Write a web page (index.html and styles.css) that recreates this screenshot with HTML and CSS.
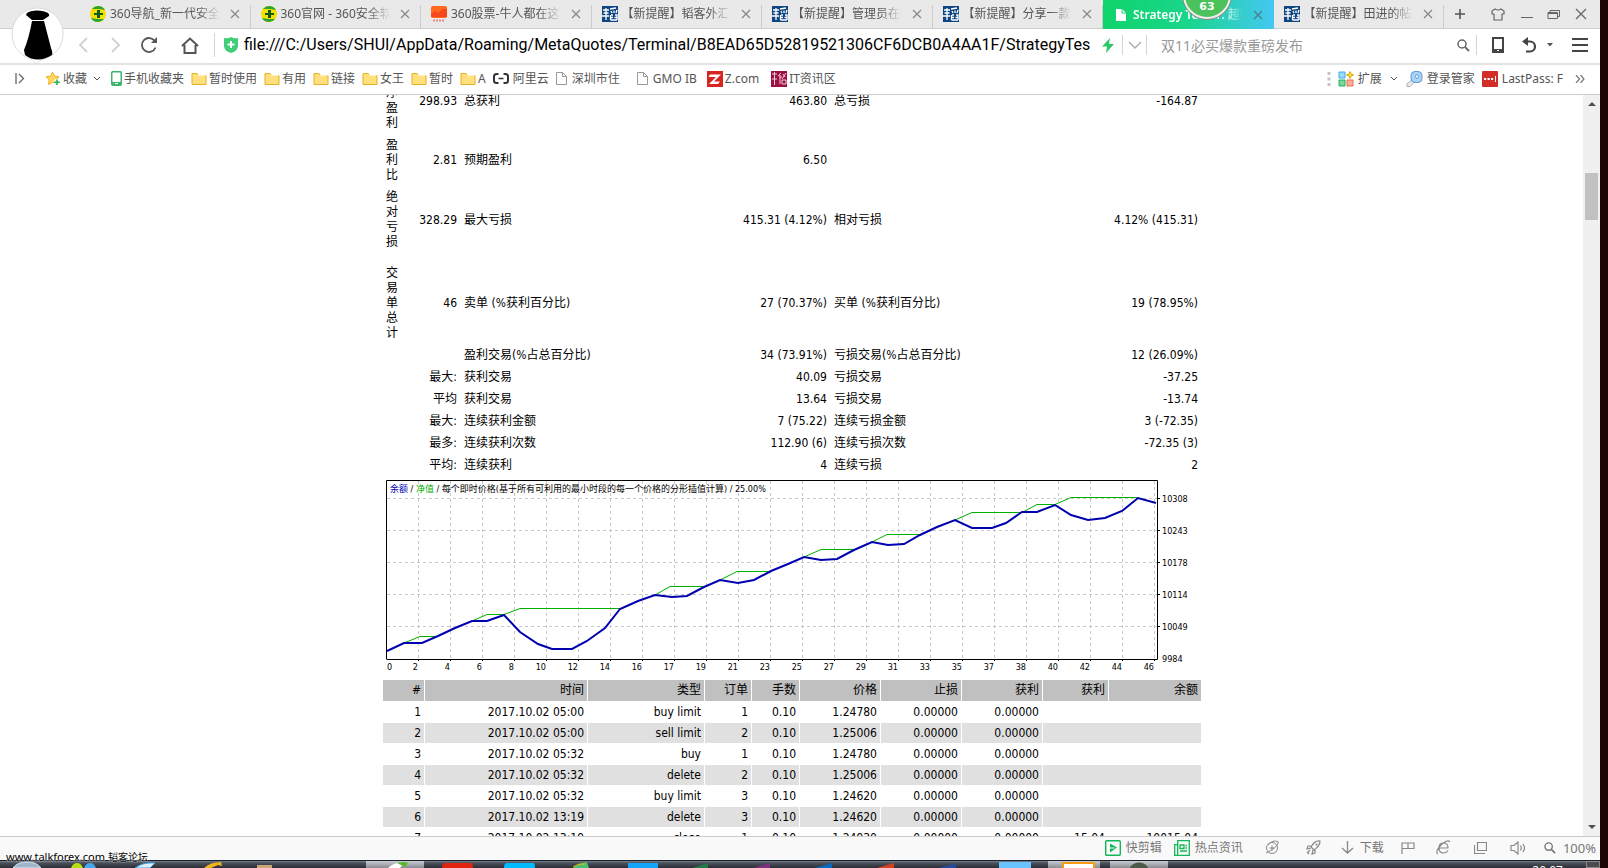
FILE: index.html
```html
<!DOCTYPE html>
<html lang="zh-CN">
<head>
<meta charset="utf-8">
<title>Strategy Tester: 超级</title>
<link rel="stylesheet" href="styles.css">
</head>
<body>
<svg class="defs" width="0" height="0" aria-hidden="true">
  <symbol id="i360" viewBox="0 0 16 16"><circle cx="8" cy="8" r="8" fill="#f4e000"/><path d="M8 0a8 8 0 0 1 7 4L9 3 2 3A8 8 0 0 1 8 0zM8 16a8 8 0 0 1-7-4l6 1 7 0a8 8 0 0 1-6 3z" fill="#2ba52e"/><path d="M7 4h3v3h3v2h-3v3H7V9H4V7h3z" fill="#0c5c1c"/></symbol>
  <symbol id="tao" viewBox="0 0 16 16"><rect width="16" height="16" fill="#0e4583"/><path d="M1 4h6M1.500 7h5M0 10h7M4 2v12M8 3l6-1M9 5l1 2M12 4.500V7M15 4l-1 3M9 9h2M8.500 9v5M13 9h2v5M8.500 11.500H11M12.500 11.500H15M8.500 14H15" stroke="#fff" stroke-width="1.300" fill="none"/></symbol>
  <symbol id="x" viewBox="0 0 10 10"><path d="M1 1l8 8M9 1L1 9" stroke="currentColor" stroke-width="1.300" fill="none"/></symbol>
  <symbol id="folder" viewBox="0 0 16 14"><path d="M1 1.500h5l1.500 2H15v9H1z" fill="#ffe07c" stroke="#e5af27"/><path d="M7 3.500h7.500" stroke="#fff2c0"/></symbol>
  <symbol id="page" viewBox="0 0 11 13"><path d="M.5.500h6l4 4v8H.500zM6.500.500v4h4" fill="#fff" stroke="#999"/></symbol>
  <symbol id="chev" viewBox="0 0 8 6"><path d="M1 1l3 3 3-3" stroke="currentColor" fill="none"/></symbol>
  <symbol id="mag" viewBox="0 0 13 13"><circle cx="5" cy="5" r="4" fill="none" stroke="currentColor" stroke-width="1.500"/><path d="M8 8l4 4" stroke="currentColor" stroke-width="1.800"/></symbol>
</svg>
<div class="desktop">
<div class="window">
  <header class="chrome">
    <div class="avatar" role="img" aria-label="avatar"><svg width="54" height="58" viewBox="0 0 54 58"><path d="M27 1a26 26 0 0 1 4 51.700l-5 4.300-5-5A26 26 0 0 1 27 1z" fill="#fff" stroke="#dcdcdc"/><path d="M17 6q3-2.500 10-2.500T38 6q2 2 1 3l-6 4H22l-6-5zM22 14h12l7 27q2 5 1 7-15 9-27 0l-1-5q5-12 8-29z" fill="#000"/></svg></div>
    <nav class="tabs" aria-label="标签">
      <div class="tab"><svg class="ic16"><use href="#i360"/></svg><a href="#">360导航_新一代安全上网</a><button aria-label="关闭"><svg><use href="#x"/></svg></button></div>
      <div class="tab"><svg class="ic16"><use href="#i360"/></svg><a href="#">360官网 - 360安全软件</a><button aria-label="关闭"><svg><use href="#x"/></svg></button></div>
      <div class="tab"><svg class="ic16" viewBox="0 0 16 16"><rect width="16" height="12" rx="2" fill="#ff6a1c"/><path d="M0 8l4-3 3 2 5-4 4 0v8H0z" fill="#f5471a"/><path d="M2 14.500h12" stroke="#e88" stroke-width="2" stroke-dasharray="2 1"/></svg><a href="#">360股票-牛人都在这里</a><button aria-label="关闭"><svg><use href="#x"/></svg></button></div>
      <div class="tab"><svg class="ic16"><use href="#tao"/></svg><a href="#">【新提醒】韬客外汇论坛</a><button aria-label="关闭"><svg><use href="#x"/></svg></button></div>
      <div class="tab"><svg class="ic16"><use href="#tao"/></svg><a href="#">【新提醒】管理员在哪里</a><button aria-label="关闭"><svg><use href="#x"/></svg></button></div>
      <div class="tab"><svg class="ic16"><use href="#tao"/></svg><a href="#">【新提醒】分享一款稳定</a><button aria-label="关闭"><svg><use href="#x"/></svg></button></div>
      <div class="tab active"><svg class="ic16" viewBox="0 0 16 16"><path d="M3 2h6l4 4v8H3z" fill="#fff"/><path d="M9 2v4h4" stroke="#1bd07a" fill="none"/></svg><a href="#">Strategy Tester: 超级</a><button aria-label="关闭"><svg><use href="#x"/></svg></button><span class="ball">63</span></div>
      <div class="tab"><svg class="ic16"><use href="#tao"/></svg><a href="#">【新提醒】田进的帖子</a><button aria-label="关闭"><svg><use href="#x"/></svg></button></div>
    </nav>
    <div class="wincontrols">
      <button aria-label="新标签"><svg width="12" height="12" viewBox="0 0 12 12"><path d="M6 1v10M1 6h10" stroke="#555" stroke-width="1.600"/></svg></button>
      <button aria-label="皮肤"><svg width="14" height="13" viewBox="0 0 14 13"><path d="M4 1L1 3v3h2v6h8V6h2V3l-3-2q-3 2-6 0z" fill="none" stroke="#666" stroke-width="1.200"/></svg></button>
      <button aria-label="最小化"><svg width="13" height="13" viewBox="0 0 13 13"><path d="M1 9.500h12" stroke="#666"/></svg></button>
      <button aria-label="还原"><svg width="13" height="13" viewBox="0 0 13 13"><path d="M1 4.500h9.500v6H1zM1 5.500h9.500M3 4V2.500h9.500v6H11" fill="none" stroke="#666"/></svg></button>
      <button aria-label="关闭窗口"><svg width="12" height="12" viewBox="0 0 12 12"><path d="M1 1l10 10M11 1L1 11" stroke="#666" stroke-width="1.300"/></svg></button>
    </div>
  </header>

  <div class="toolbar">
    <div class="nav">
      <button aria-label="后退"><svg width="10" height="16" viewBox="0 0 10 16"><path d="M9 1L2 8l7 7" stroke="#d0d0d0" stroke-width="1.800" fill="none"/></svg></button>
      <button aria-label="前进"><svg width="10" height="16" viewBox="0 0 10 16"><path d="M1 1l7 7-7 7" stroke="#d0d0d0" stroke-width="1.800" fill="none"/></svg></button>
      <button aria-label="刷新"><svg width="18" height="18" viewBox="0 0 18 18"><path d="M15.500 11.500A7 7 0 1 1 15 5.500" stroke="#555" stroke-width="1.800" fill="none"/><path d="M17 1v6h-6z" fill="#555"/></svg></button>
      <button aria-label="主页"><svg width="18" height="17" viewBox="0 0 18 17"><path d="M1 9l8-7.500L17 9M3.500 8v8h11V8" stroke="#555" stroke-width="2" fill="none"/></svg></button>
    </div>
    <label class="address"><svg width="14" height="16" viewBox="0 0 14 16"><path d="M0 1q4 1 7-1 3 2 7 1v8q0 5-7 7-7-2-7-7z" fill="#3fce78"/><path d="M7 4v7M3.500 7.500h7" stroke="#fff" stroke-width="2"/></svg>
      <input type="text" aria-label="地址" value="file:///C:/Users/SHUI/AppData/Roaming/MetaQuotes/Terminal/B8EAD65D52819521306CF6DCB0A4AA1F/StrategyTes"></label>
    <button class="flash" aria-label="极速模式"><svg width="12" height="15" viewBox="0 0 12 15"><path d="M8 0L0 8.500h5L4 15l8-9H7z" fill="#2bc866"/></svg></button>
    <button class="drop" aria-label="展开"><svg width="14" height="9" viewBox="0 0 14 9"><path d="M1 1l6 6 6-6" stroke="#aaa" stroke-width="1.400" fill="none"/></svg></button>
    <input class="search" type="text" aria-label="搜索" placeholder="双11必买爆款重磅发布">
    <button class="go" aria-label="搜索"><svg width="13" height="13"><use href="#mag"/></svg></button>
    <div class="tools">
      <button aria-label="手机"><svg width="12" height="16" viewBox="0 0 12 16"><path d="M1 1h10v14H1z" fill="none" stroke="#444" stroke-width="2"/><path d="M1 12h10v3H1z" fill="#444"/><path d="M5 13.500h2" stroke="#fff"/></svg></button>
      <button aria-label="恢复"><svg width="15" height="16" viewBox="0 0 15 16"><path d="M3 4.500h5a5 5 0 0 1 0 10H4" stroke="#444" stroke-width="2.200" fill="none"/><path d="M6 0v9L0 4.500z" fill="#444"/></svg></button>
      <button aria-label="更多"><svg width="6" height="4" viewBox="0 0 6 4"><path d="M0 0h6L3 3.500z" fill="#555"/></svg></button>
      <button aria-label="菜单"><svg width="16" height="14" viewBox="0 0 16 14"><path d="M0 1h16M0 7h16M0 13h16" stroke="#444" stroke-width="2"/></svg></button>
    </div>
  </div>

  <nav class="bookmarks" aria-label="收藏栏">
    <button class="toggle" aria-label="侧栏"><svg width="10" height="11" viewBox="0 0 10 11"><path d="M1 0v11M4 1l4.500 4.500L4 10" stroke="#666" stroke-width="1.300" fill="none"/></svg></button>
    <a class="fav" href="#"><svg width="16" height="15" viewBox="0 0 16 15"><path d="M7.500 1l2 4.200 4.500.6-3.200 3.100.7 4.600-4-2.200-4 2.200.7-4.600L1 5.800l4.500-.6z" fill="#ffd95a" stroke="#f0ac2a"/><path d="M12 8v6.500M8.800 11.300h6.400" stroke="#fff" stroke-width="3.500"/><path d="M12 8.500v5.600M9.200 11.300h5.600" stroke="#27b15c" stroke-width="1.600"/></svg>收藏<svg class="down"><use href="#chev"/></svg></a>
    <a href="#"><svg width="11" height="15" viewBox="0 0 11 15"><rect x=".75" y=".75" width="9.500" height="13.500" rx="1" fill="#fff" stroke="#3cb66e" stroke-width="1.500"/><path d="M1 11h9v3H1z" fill="#3cb66e"/><path d="M4 12.500h3" stroke="#fff"/></svg>手机收藏夹</a>
    <a href="#"><svg class="fold"><use href="#folder"/></svg>暂时使用</a>
    <a href="#"><svg class="fold"><use href="#folder"/></svg>有用</a>
    <a href="#"><svg class="fold"><use href="#folder"/></svg>链接</a>
    <a href="#"><svg class="fold"><use href="#folder"/></svg>女王</a>
    <a href="#"><svg class="fold"><use href="#folder"/></svg>暂时</a>
    <a href="#"><svg class="fold"><use href="#folder"/></svg>A</a>
    <a class="ali" href="#"><svg width="16" height="11" viewBox="0 0 16 11"><path d="M5.500 1H3.500Q1 1 1 3.500v4Q1 10 3.500 10h2M10.500 1h2Q15 1 15 3.500v4Q15 10 12.500 10h-2" stroke="#333" stroke-width="2" fill="none"/><path d="M5.500 5.500h5" stroke="#333" stroke-width="1.500"/></svg>阿里云</a>
    <a class="doc" href="#"><svg class="pg"><use href="#page"/></svg>深圳市住</a>
    <a class="doc wide" href="#"><svg class="pg"><use href="#page"/></svg>GMO IB</a>
    <a href="#"><svg width="16" height="16" viewBox="0 0 16 16"><rect width="16" height="16" fill="#d8251f"/><path d="M3 3.500h11l-7 7h6l-2 2.500H2l7-7H1.500z" fill="#fff"/></svg>Z.com</a>
    <a class="it" href="#"><svg width="16" height="16" viewBox="0 0 16 16"><rect width="16" height="16" fill="#9c1145"/><path d="M1 3h5M3.500 1v13M1 8h5M7 5l3-3M8 6h3M9 4v9M12 3l2 3M15 2l-4 6M11 9h4v4h-4z" stroke="#f0c8d8" fill="none"/></svg>IT资讯区</a>
    <span class="fill"></span>
    <svg width="4" height="14" viewBox="0 0 4 14"><path d="M2 0v3M2 5.500v3M2 11v3" stroke="#c4c4c4" stroke-width="3"/></svg>
    <a class="ext" href="#"><svg width="16" height="16" viewBox="0 0 16 16"><path d="M1 1h6v6H1z" fill="#9bdcf8" stroke="#3badea"/><path d="M1 9h6v6H1z" fill="#79d89a" stroke="#22b05a"/><path d="M9 9h6v6H9z" fill="#fbb09c" stroke="#ef6a50"/><path d="M12 .5l1 2.500 2.500 1L13 5l-1 2.500L11 5 8.500 4 11 3z" fill="#ffe34d" stroke="#e2a800"/></svg>扩展<svg class="down"><use href="#chev"/></svg></a>
    <a class="key" href="#"><svg width="17" height="16" viewBox="0 0 17 16"><path d="M7 8l-6 5v2.500h3l5-5" fill="#eee" stroke="#aaa"/><rect x="5" y=".5" width="11" height="11" rx="4" fill="#a9d4f5" stroke="#5c9bd0"/><circle cx="11" cy="5.500" r="1.700" fill="#fff" stroke="#5c9bd0"/></svg>登录管家</a>
    <a class="key" href="#"><svg width="16" height="16" viewBox="0 0 16 16"><rect width="16" height="16" rx="1" fill="#d32d27"/><path d="M2 8h2.200M5.500 8h2.200M9 8h2.200" stroke="#fff" stroke-width="2.200"/><path d="M13.500 5v6" stroke="#fff"/></svg>LastPass: F</a>
    <button class="more" aria-label="更多收藏"><svg width="10" height="8" viewBox="0 0 10 8"><path d="M1 0l3.500 4L1 8M5.500 0L9 4 5.500 8" stroke="#777" stroke-width="1.200" fill="none"/></svg></button>
  </nav>

  <div class="view">
    <main class="page">
      <article class="report">
        <table class="summary">
          <colgroup><col class="c-tag"><col class="c-val"><col class="c-name"><col class="c-num"><col class="c-name"><col></colgroup>
          <tbody>
          <tr><td>总净盈利</td><td>298.93</td><td>总获利</td><td>463.80</td><td>总亏损</td><td>-164.87</td></tr>
          <tr><td>盈利比</td><td>2.81</td><td>预期盈利</td><td>6.50</td><td></td><td></td></tr>
          <tr><td>绝对亏损</td><td>328.29</td><td>最大亏损</td><td>415.31 (4.12%)</td><td>相对亏损</td><td>4.12% (415.31)</td></tr>
          <tr class="gap"><td colspan="6"></td></tr>
          <tr><td>交易单总计</td><td>46</td><td>卖单 (%获利百分比)</td><td>27 (70.37%)</td><td>买单 (%获利百分比)</td><td>19 (78.95%)</td></tr>
          <tr><td></td><td></td><td>盈利交易(%占总百分比)</td><td>34 (73.91%)</td><td>亏损交易(%占总百分比)</td><td>12 (26.09%)</td></tr>
          <tr><td></td><td>最大:</td><td>获利交易</td><td>40.09</td><td>亏损交易</td><td>-37.25</td></tr>
          <tr><td></td><td>平均</td><td>获利交易</td><td>13.64</td><td>亏损交易</td><td>-13.74</td></tr>
          <tr><td></td><td>最大:</td><td>连续获利金额</td><td>7 (75.22)</td><td>连续亏损金额</td><td>3 (-72.35)</td></tr>
          <tr><td></td><td>最多:</td><td>连续获利次数</td><td>112.90 (6)</td><td>连续亏损次数</td><td>-72.35 (3)</td></tr>
          <tr><td></td><td>平均:</td><td>连续获利</td><td>4</td><td>连续亏损</td><td>2</td></tr>
          </tbody>
        </table>
        <figure class="chart">
          <svg width="812" height="196" viewBox="0 0 812 196">
            <path class="grid" d="M32.500 1v178M64.500 1v178M96.500 1v178M128.500 1v178M160.500 1v178M192.500 1v178M224.500 1v178M256.500 1v178M288.500 1v178M320.500 1v178M352.500 1v178M384.500 1v178M416.500 1v178M448.500 1v178M480.500 1v178M512.500 1v178M544.500 1v178M576.500 1v178M608.500 1v178M640.500 1v178M672.500 1v178M704.500 1v178M736.500 1v178M768.500 1v178M1 18.500h770M1 50.500h770M1 82.500h770M1 114.500h770M1 146.500h770"/>
            <path class="equity" d="M18 163L34 156.500H52M86 141L101 134.500H118L134 128.500H234M269 115L284 106.500H318M334 100L351 91.500H385M418 77L435 69.500H468M486 62L501 54.500H534M569 40L586 32.500H636L651 24.500H669L685 17.500H752"/>
            <polyline class="balance" points="1,171 18,163 36,163 52,156 69,148 86,141 101,141 118,135 134,152 152,164 166,169 186,169 201,161 219,148 234,129 252,121 269,115 286,117 301,116 318,107 334,100 352,103 368,100 385,91 402,84 418,77 435,80 451,79 468,70 486,62 502,65 518,64 534,55 551,47 569,40 586,48 606,48 620,43 636,32 651,32 669,25 685,35 702,40 719,38 736,31 752,18 770,23"/>
            <path class="axis" d="M.5 179V.5H771.500V179.500H.5M771 18.500h3M771 50.500h3M771 82.500h3M771 114.500h3M771 146.500h3M32.500 179v2M64.500 179v2M96.500 179v2M128.500 179v2M160.500 179v2M192.500 179v2M224.500 179v2M256.500 179v2M288.500 179v2M320.500 179v2M352.500 179v2M384.500 179v2M416.500 179v2M448.500 179v2M480.500 179v2M512.500 179v2M544.500 179v2M576.500 179v2M608.500 179v2M640.500 179v2M672.500 179v2M704.500 179v2M736.500 179v2M768.500 179v2"/>
            <text x="4" y="12"><tspan fill="#0000b0">余额</tspan> / <tspan fill="#00b000">净值</tspan> / 每个即时价格(基于所有可利用的最小时段的每一个价格的分形插值计算) / 25.00%</text>
            <g><text x="776" y="22">10308</text><text x="776" y="54">10243</text><text x="776" y="86">10178</text><text x="776" y="118">10114</text><text x="776" y="150">10049</text><text x="776" y="182">9984</text></g>
            <text x="1" y="190">0</text>
            <g text-anchor="end"><text x="32" y="190">2</text><text x="64" y="190">4</text><text x="96" y="190">6</text><text x="128" y="190">8</text><text x="160" y="190">10</text><text x="192" y="190">12</text><text x="224" y="190">14</text><text x="256" y="190">16</text><text x="288" y="190">17</text><text x="320" y="190">19</text><text x="352" y="190">21</text><text x="384" y="190">23</text><text x="416" y="190">25</text><text x="448" y="190">27</text><text x="480" y="190">29</text><text x="512" y="190">31</text><text x="544" y="190">33</text><text x="576" y="190">35</text><text x="608" y="190">37</text><text x="640" y="190">38</text><text x="672" y="190">40</text><text x="704" y="190">42</text><text x="736" y="190">44</text><text x="768" y="190">46</text></g>
          </svg>
        </figure>
        <table class="trades">
          <colgroup><col class="t-no"><col class="t-time"><col class="t-type"><col class="t-order"><col class="t-lots"><col class="t-price"><col class="t-price"><col class="t-price"><col class="t-profit"><col></colgroup>
          <thead><tr><th>#</th><th>时间</th><th>类型</th><th>订单</th><th>手数</th><th>价格</th><th>止损</th><th>获利</th><th>获利</th><th>余额</th></tr></thead>
          <tbody>
          <tr><td>1</td><td>2017.10.02 05:00</td><td>buy limit</td><td>1</td><td>0.10</td><td>1.24780</td><td>0.00000</td><td>0.00000</td><td colspan="2"></td></tr>
          <tr><td>2</td><td>2017.10.02 05:00</td><td>sell limit</td><td>2</td><td>0.10</td><td>1.25006</td><td>0.00000</td><td>0.00000</td><td colspan="2"></td></tr>
          <tr><td>3</td><td>2017.10.02 05:32</td><td>buy</td><td>1</td><td>0.10</td><td>1.24780</td><td>0.00000</td><td>0.00000</td><td colspan="2"></td></tr>
          <tr><td>4</td><td>2017.10.02 05:32</td><td>delete</td><td>2</td><td>0.10</td><td>1.25006</td><td>0.00000</td><td>0.00000</td><td colspan="2"></td></tr>
          <tr><td>5</td><td>2017.10.02 05:32</td><td>buy limit</td><td>3</td><td>0.10</td><td>1.24620</td><td>0.00000</td><td>0.00000</td><td colspan="2"></td></tr>
          <tr><td>6</td><td>2017.10.02 13:19</td><td>delete</td><td>3</td><td>0.10</td><td>1.24620</td><td>0.00000</td><td>0.00000</td><td colspan="2"></td></tr>
          <tr><td>7</td><td>2017.10.02 13:19</td><td>close</td><td>1</td><td>0.10</td><td>1.24930</td><td>0.00000</td><td>0.00000</td><td>15.04</td><td>10015.04</td></tr>
          </tbody>
        </table>
      </article>
    </main>
    <div class="scrollbar" aria-hidden="true"><svg class="arrow" viewBox="0 0 8 4"><path d="M0 4h8L4 0z"/></svg><span class="track"><span class="thumb"></span></span><svg class="arrow" viewBox="0 0 8 4"><path d="M0 0h8L4 4z"/></svg></div>
  </div>

  <footer class="status">
    <button><svg width="16" height="16" viewBox="0 0 16 16"><rect x=".7" y=".7" width="14.600" height="14.600" rx="1" fill="none" stroke="#12b758" stroke-width="1.400"/><path d="M5 3.500l7 4-7 5z" fill="#12b758"/><path d="M4.500 8h5" stroke="#f9f9f9"/></svg>快剪辑</button>
    <button class="news"><svg width="16" height="16" viewBox="0 0 16 16"><path d="M3.700.7h11.600v14.600H3.700zM3.700 4.700H.7v10.600h3M6 5h4v3.500H6zM6 11h7M11.500 5.500H13M11.500 8H13" fill="none" stroke="#12b758" stroke-width="1.300"/></svg>热点资讯</button>
    <button class="i1" aria-label="加速"><svg width="15" height="15" viewBox="0 0 15 15"><circle cx="7" cy="8" r="5.500" fill="none" stroke="#888"/><path d="M7 5.500v5M4.500 8h5M1 13Q12 8 13.500 2 8-1 3 5" stroke="#888" fill="none"/></svg></button>
    <button class="i2" aria-label="火箭"><svg width="15" height="15" viewBox="0 0 15 15"><path d="M14 1Q9 0 5 7l3 3q6-4 6-9zM5.500 6H2L1 9l4-1M9 9.500V13l-3 1 1-4M4 10l-3 3M2 13l1 1" fill="none" stroke="#888" stroke-width="1.200"/><circle cx="10.500" cy="4.500" r="1" fill="#888"/></svg></button>
    <button class="i3"><svg width="13" height="13" viewBox="0 0 13 13"><path d="M6.500 0v12M1 7l5.500 5L12 7" fill="none" stroke="#888" stroke-width="1.300"/></svg>下载</button>
    <button class="i4" aria-label="标记"><svg width="14" height="12" viewBox="0 0 14 12"><path d="M1 12V1h12v5.500H1M7 1v5.500" fill="none" stroke="#888" stroke-width="1.200"/></svg></button>
    <button class="i5" aria-label="内核"><svg width="15" height="15" viewBox="0 0 15 15"><path d="M3 8h9q0-5-4.500-5T3 8q0 5 4.500 5 3 0 4.500-2.500M1.500 14Q-1 11 6 4q6-5 8-2" fill="none" stroke="#888" stroke-width="1.200"/></svg></button>
    <button class="i6" aria-label="窗口"><svg width="13" height="12" viewBox="0 0 13 12"><path d="M3.500.5h9v8h-9zM.5 3v8.500H11" fill="none" stroke="#888" stroke-width="1.200"/></svg></button>
    <button class="i7" aria-label="声音"><svg width="16" height="14" viewBox="0 0 16 14"><path d="M1 4.500h3L8 1v12L4 9.500H1zM10.500 4.500q1.500 2.500 0 5M13 3q3 4 0 8" fill="none" stroke="#888" stroke-width="1.200"/></svg></button>
    <button class="zoom"><svg width="12" height="12"><use href="#mag"/></svg>100%</button>
    <span class="watermark">www.talkforex.com <b>韬客论坛</b></span>
  </footer>

  <div class="taskbar">
    <svg width="1100" height="7" viewBox="0 0 1100 7" aria-hidden="true">
      <defs><linearGradient id="seg" x2="0" y2="1"><stop offset="0" stop-color="#c8cbd0"/><stop offset="1" stop-color="#888c92"/></linearGradient></defs>
      <path d="M13 7q4-6 14-6t14 6z" fill="#9fb6cc" stroke="#dce8f2"/>
      <path d="M71 7q2-5 6-5t6 5z" fill="#b8e010"/><path d="M84 7q2-5 6-5t6 5z" fill="#46a8f0"/>
      <path d="M135 7q8-6 20-5l-5 5z" fill="#dff0fb" stroke="#3ba0e0"/>
      <path d="M204 7q6-6 17-6l1 4-4-1-7 3z" fill="#f0b41c"/><path d="M257 4h15v3h-15z" fill="#c8a878"/>
      <path d="M366 0h58v7h-58z" fill="url(#seg)"/><path d="M388 7q6-6 16-5l-4 5z" fill="#fff"/><path d="M397 2q8-2 11 0l-3 4z" fill="#56b82c"/>
      <path d="M442 7q0-5 4-5h24q3 0 3 5z" fill="#e02410"/><path d="M504 7q0-5 3-5h26q2 0 2 5z" fill="#00bcff"/>
      <path d="M573 7q5-5 14-6l2 6z" fill="#48c070"/><path d="M573 6q5-4 12-3" stroke="#f0c000" fill="none"/>
      <path d="M628 2h30v5h-30z" fill="#12a5fa"/><path d="M692 7l16-5v5z" fill="#207c46"/><path d="M753 7l17-5v5z" fill="#80307c"/><path d="M815 7l17-5v5z" fill="#0a68c0"/><path d="M877 7l17-5v5z" fill="#d84024"/><path d="M939 7l17-5v5z" fill="#244c98"/><path d="M999 1h32v6h-32z" fill="#68c4ff"/>
      <path d="M1048 0h52v7h-52z" fill="url(#seg)"/><path d="M1063 7V2h31v5" fill="#fff" stroke="#f89c18" stroke-width="2"/>
    </svg>
    <span class="task"></span>
    <span class="fill"></span>
    <time>20:07</time>
    <button class="desk" aria-label="显示桌面"></button>
  </div>
</div>
</div>
</body>
</html>
```
FILE: styles.css
```css
* { box-sizing: border-box; }
body {
  margin: 0;
  overflow: hidden;
  font: 12px/16px "Noto Sans", "Noto Sans CJK SC", sans-serif;
  color: #444;
}
.defs { position: absolute; }
button { padding: 0; border: 0; background: none; font: inherit; color: inherit; display: flex; align-items: center; flex: none; }
a { color: inherit; text-decoration: none; white-space: nowrap; }
input { border: 0; padding: 0; outline: 0; background: none; font: inherit; color: #000; min-width: 0; }
svg { flex: none; }
.fill { flex: 1; }

.desktop { height: 100vh; padding-right: 8px; background: #1c0505; }
.window { height: 100%; display: flex; flex-direction: column; background: #fff; }

/* tabs */
.chrome { position: relative; display: flex; height: 29px; padding-left: 80px; background: #e9e9e9; border-bottom: 1px solid #ccc; }
.avatar { position: absolute; left: 10px; top: 7px; z-index: 2; }
.tabs { flex: 1; min-width: 0; display: flex; }
.tab { position: relative; flex: 1; min-width: 0; display: flex; align-items: center; gap: 4px; padding: 0 11px 0 10px; }
.tab::after { content: ""; position: absolute; right: 0; top: 5px; bottom: 0; width: 1px; background: #ccc; }
.tab a { flex: 1; min-width: 0; overflow: hidden; color: #555; -webkit-mask-image: linear-gradient(90deg, #000 80%, transparent); mask-image: linear-gradient(90deg, #000 80%, transparent); }
.tab button { width: 10px; margin-left: 6px; color: #888; }
.tab button svg { width: 10px; height: 10px; }
.ic16 { width: 16px; height: 16px; }
.active { height: 29px; background: linear-gradient(90deg, #0fd36a, #19d68c 50%, #44c8f4); }
.active::after { display: none; }
.active a { color: #fff; font-weight: 600; }
.active button { color: #4a8090; }
.ball { position: absolute; left: 80px; top: -29px; width: 48px; height: 48px; border: 2px solid #eee; border-radius: 50%; background: #4cc25c; box-shadow: 0 0 0 1px #888; color: #fff; font: bold 11px/14px "DejaVu Sans", sans-serif; text-align: center; padding-top: 27px; }
.wincontrols { flex: none; display: flex; align-items: center; justify-content: space-between; width: 156px; padding: 0 13px 0 10px; }
.wincontrols button:first-child { margin-right: 10px; }

/* toolbar */
.toolbar { display: flex; align-items: center; height: 36px; padding-bottom: 2px; border-bottom: 2px solid #e4e4e4; }
.nav { flex: none; display: flex; align-items: center; padding-left: 78px; width: 214px; gap: 23px; }
.nav button:nth-child(3) { margin-left: -4px; }
.address { display: flex; align-items: center; flex: 1; min-width: 0; gap: 6px; padding-left: 9px; border-left: 1px solid #d4d4d4; }
.address input { flex: 1; height: 24px; font: 16px/24px Roboto, "Noto Sans", sans-serif; }
.flash { width: 20px; justify-content: center; }
.drop { width: 25px; height: 20px; justify-content: center; border: solid #d4d4d4; border-width: 0 1px; margin-left: 4px; }
.search { flex: none; width: 303px; padding-left: 14px; font-size: 14px; height: 24px; }
.search::placeholder { color: #999; }
.go { width: 27px; height: 20px; justify-content: center; border-right: 1px solid #d4d4d4; color: #666; }
.tools { flex: none; display: flex; align-items: center; gap: 18px; padding: 0 12px 0 15px; }
.tools button:nth-child(3) { margin: 0 1px 0 -8px; }

/* bookmarks */
.bookmarks { display: flex; align-items: center; gap: 7px; height: 30px; padding: 0 15px 2px; border-bottom: 1px solid #ccc; color: #555; }
.bookmarks a { display: flex; align-items: center; gap: 2px; }
.bookmarks .fav { margin-left: 13px; margin-right: 3px; }
.down { width: 8px; height: 6px; margin-left: 4px; }
.fold { width: 16px; height: 14px; }
.pg { width: 11px; height: 13px; }
.bookmarks .ali { gap: 4px; }
.bookmarks .doc { gap: 5px; }
.bookmarks .wide { margin: 0 3px 0 10px; }
.bookmarks .it { margin-left: 5px; }
.bookmarks .ext { gap: 4px; margin-right: 1px; }
.bookmarks .key { gap: 4px; }
.more { margin-left: 5px; }

/* report */
.view { flex: 1; min-height: 0; display: flex; }
.page { flex: 1; overflow: hidden; padding-left: 1px; background: #fff; color: #000; font: 12px/15px "DejaVu Sans Condensed", "Noto Sans CJK SC", sans-serif; }
.report { width: 820px; margin: -28px auto 0; }
table { width: 100%; table-layout: fixed; border-collapse: separate; border-spacing: 1px; }
td, th { padding: 3px; font-weight: normal; text-align: right; line-height: 15px; }
.summary tr :nth-child(odd) { text-align: left; }
.summary tr td:first-child { word-break: break-all; }
.summary td { white-space: nowrap; }
.summary td:first-child { white-space: normal; }
.summary .gap td { height: 8px; padding: 0; }
.c-tag { width: 18px; }
.c-val { width: 58px; }
.c-name { width: 200px; }
.c-num { width: 168px; }
.chart { margin: 0; padding: 3px 4px; }
.chart svg { display: block; }
.chart text { font-size: 9px; }
.grid { stroke: #c8c8c8; stroke-dasharray: 3 3; fill: none; }
.axis { stroke: #000; fill: none; }
.equity { stroke: #00b000; fill: none; }
.balance { stroke: #0000b0; stroke-width: 2; fill: none; }
.trades th { background: #c0c0c0; }
.trades td { padding-bottom: 2px; }
.trades tbody tr:nth-child(even) td { background: #e0e0e0; }
.t-no { width: 41px; }
.t-time { width: 162px; }
.t-type { width: 116px; }
.t-order { width: 46px; }
.t-lots { width: 47px; }
.t-price { width: 80px; }
.t-profit { width: 65px; }

.scrollbar { width: 17px; background: #f0f0f0; display: flex; flex-direction: column; align-items: center; padding: 7px 0; }
.arrow { width: 8px; height: 4px; fill: #505050; }
.track { flex: 1; width: 13px; padding-top: 67px; }
.thumb { display: block; height: 47px; background: #c1c1c1; }

/* status bar */
.status { position: relative; display: flex; align-items: center; justify-content: flex-end; height: 24px; padding: 0 4px 2px 0; background: #f9f9f9; border-top: 1px solid #ccc; color: #777; }
.status button { gap: 5px; }
.status .news { margin-left: 12px; }
.status .i1 { margin-left: 22px; }
.status .i2 { margin-left: 26px; }
.status .i3 { margin-left: 20px; gap: 6px; }
.status .i4 { margin-left: 17px; }
.status .i5 { margin-left: 21px; }
.status .i6 { margin-left: 23px; }
.status .i7 { margin-left: 23px; }
.status .zoom { margin-left: 18px; font-size: 13px; gap: 7px; }
.watermark { position: absolute; left: 6px; top: 13px; z-index: 1; color: #000; font: 11px/14px "Noto Sans", "Noto Sans CJK SC", sans-serif; text-shadow: 0 0 1px #fff, 0 0 1px #fff; }
.watermark b { font-weight: normal; font-size: 10px; }

.taskbar { display: flex; height: 8px; overflow: hidden; border-top: 1px solid #18222e; background: linear-gradient(#77808c, #4b505a 2px, #2a2d36); }
.task { width: 58px; margin-left: 10px; background: radial-gradient(circle at 50% 12px, #4c5848 10px, transparent 11px), linear-gradient(#c8cbd0, #888c92); }
.taskbar time { font: 12px/15px "Noto Sans", sans-serif; color: #fff; padding-top: 2px; margin-right: 23px; }
.desk { width: 14px; background: #4a4c50; border: 1px solid #888; }
```
